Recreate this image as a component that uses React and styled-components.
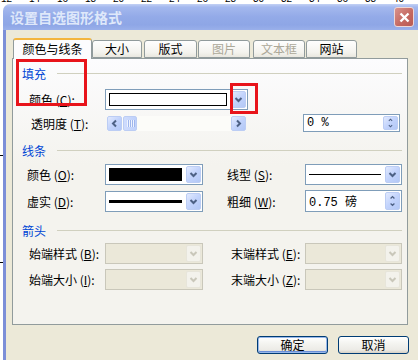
import React from "react"
import styled, { createGlobalStyle } from "styled-components"

const GlobalStyle = createGlobalStyle`
  * { box-sizing: border-box; }
  html, body { margin: 0; padding: 0; background: #fff; }
  body {
    width: 418px;
    height: 360px;
    overflow: hidden;
    font-family: "Noto Sans CJK SC", "Liberation Sans", sans-serif;
    font-size: 12px;
    color: #000;
  }
`

const rulerMarks = [12, 14, 16, 18, 20, 22, 24, 26, 28, 30, 32, 34, 36, 38, 40]

const tabs = [
  { label: "颜色与线条", w: 79, ml: 1, active: true },
  { label: "大小", w: 50, ml: 0 },
  { label: "版式", w: 53, ml: 2 },
  { label: "图片", w: 52, ml: 1, disabled: true },
  { label: "文本框", w: 52, ml: 3, disabled: true },
  { label: "网站", w: 51, ml: 1 },
]

const Chevron = ({ dir = "down", color = "#4d6185" }) => {
  const d = {
    down: "M2.5 4 L5.5 7 L8.5 4",
    up: "M2.5 7 L5.5 4 L8.5 7",
    left: "M7 2.5 L4 5.5 L7 8.5",
    right: "M4 2.5 L7 5.5 L4 8.5",
  }[dir]
  return (
    <svg width="11" height="11" viewBox="0 0 11 11">
      <path d={d} fill="none" stroke={color} strokeWidth="2" />
    </svg>
  )
}

const App = () => (
  <Screen>
    <GlobalStyle />
    <Ruler>
      {rulerMarks.map((n) => (
        <span key={n}>{n}</span>
      ))}
    </Ruler>
    <Desk>
      <DocMargin />
      <Dialog>
        <TitleBar>
          <Title>设置自选图形格式</Title>
          <CloseButton>
            <svg width="11" height="11" viewBox="0 0 11 11">
              <path d="M1.5 1.5 L9.5 9.5 M9.5 1.5 L1.5 9.5" stroke="#fff" strokeWidth="2.4" />
            </svg>
          </CloseButton>
        </TitleBar>
        <Body>
          <TabStrip>
            {tabs.map((t) => (
              <Tab key={t.label} $w={t.w} $ml={t.ml} $active={t.active} $disabled={t.disabled}>
                {t.label}
              </Tab>
            ))}
          </TabStrip>
          <Panel>
            <SectionHeader>
              <span>填充</span>
            </SectionHeader>
            <FieldRow $mt={8}>
              <Label $indent={2}>
                颜色 (<u>C</u>):
              </Label>
              <Combo $w={143}>
                <ComboValue $pad={2}>
                  <Swatch $color="#fff" />
                </ComboValue>
                <DropButton>
                  <Chevron />
                </DropButton>
              </Combo>
            </FieldRow>
            <FieldRow $mt={3} $h={20}>
              <Label $indent={4}>
                透明度 (<u>T</u>):
              </Label>
              <Scrollbar>
                <ScrollButton>
                  <Chevron dir="left" />
                </ScrollButton>
                <Thumb>
                  <i />
                  <i />
                  <i />
                  <i />
                </Thumb>
                <Track />
                <ScrollButton>
                  <Chevron dir="right" />
                </ScrollButton>
              </Scrollbar>
              <Spin $w={97} $h={18} $ml={57}>
                <SpinText>0 %</SpinText>
                <SpinButtons>
                  <Chevron dir="up" />
                  <Chevron dir="down" />
                </SpinButtons>
              </Spin>
            </FieldRow>

            <SectionHeader $mt={10}>
              <span>线条</span>
            </SectionHeader>
            <FieldRow $mt={6}>
              <Label>
                颜色 (<u>O</u>):
              </Label>
              <Combo $w={98}>
                <ComboValue $pad={2}>
                  <Swatch $color="#000" />
                </ComboValue>
                <DropButton>
                  <Chevron />
                </DropButton>
              </Combo>
              <Gap />
              <Label>
                线型 (<u>S</u>):
              </Label>
              <Combo $w={97}>
                <ComboValue>
                  <LineSample $thick={1} />
                </ComboValue>
                <DropButton>
                  <Chevron />
                </DropButton>
              </Combo>
            </FieldRow>
            <FieldRow $mt={5}>
              <Label>
                虚实 (<u>D</u>):
              </Label>
              <Combo $w={98}>
                <ComboValue>
                  <LineSample $thick={3} />
                </ComboValue>
                <DropButton>
                  <Chevron />
                </DropButton>
              </Combo>
              <Gap />
              <Label>
                粗细 (<u>W</u>):
              </Label>
              <Spin $w={97} $h={22}>
                <SpinText>0.75 磅</SpinText>
                <SpinButtons>
                  <Chevron dir="up" />
                  <Chevron dir="down" />
                </SpinButtons>
              </Spin>
            </FieldRow>

            <SectionHeader $mt={11}>
              <span>箭头</span>
            </SectionHeader>
            <FieldRow $mt={5}>
              <Label $indent={2} $disabled>
                始端样式 (<u>B</u>):
              </Label>
              <Combo $w={98} $disabled>
                <ComboValue />
                <DropButton $disabled>
                  <Chevron color="#c9c7ba" />
                </DropButton>
              </Combo>
              <Gap />
              <Label $indent={4} $disabled>
                末端样式 (<u>E</u>):
              </Label>
              <Combo $w={97} $disabled>
                <ComboValue />
                <DropButton $disabled>
                  <Chevron color="#c9c7ba" />
                </DropButton>
              </Combo>
            </FieldRow>
            <FieldRow $mt={4}>
              <Label $indent={2} $disabled>
                始端大小 (<u>I</u>):
              </Label>
              <Combo $w={98} $disabled>
                <ComboValue />
                <DropButton $disabled>
                  <Chevron color="#c9c7ba" />
                </DropButton>
              </Combo>
              <Gap />
              <Label $indent={4} $disabled>
                末端大小 (<u>Z</u>):
              </Label>
              <Combo $w={97} $disabled>
                <ComboValue />
                <DropButton $disabled>
                  <Chevron color="#c9c7ba" />
                </DropButton>
              </Combo>
            </FieldRow>

            <Highlight $kind="label" />
            <Highlight $kind="button" />
          </Panel>
          <ButtonRow>
            <PushButton $default>确定</PushButton>
            <PushButton>取消</PushButton>
          </ButtonRow>
        </Body>
      </Dialog>
    </Desk>
  </Screen>
)

export default App

const Screen = styled.div`
  width: 418px;
  height: 360px;
  overflow: hidden;
  background: #fff;
`

const Ruler = styled.div`
  height: 4px;
  overflow: hidden;
  display: flex;
  padding-left: 1px;
  font-family: "Liberation Sans", sans-serif;
  font-size: 10px;
  line-height: 10px;
  span {
    width: 28px;
    flex-shrink: 0;
    margin-top: -6px;
  }
`

const Desk = styled.div`
  display: flex;
  height: 356px;
`

const DocMargin = styled.div`
  width: 3px;
  flex-shrink: 0;
  background: linear-gradient(
    to bottom,
    #fff 151px,
    #000 151px,
    #000 152px,
    #fff 152px,
    #fff 258px,
    #000 258px,
    #000 259px,
    #fff 259px
  );
`

const Dialog = styled.div`
  width: 419px;
  flex-shrink: 0;
  display: flex;
  flex-direction: column;
  background: #ece9d8;
  border-top-left-radius: 7px;
  overflow: hidden;
`

const TitleBar = styled.div`
  height: 26px;
  display: flex;
  align-items: center;
  justify-content: space-between;
  padding: 0 8px 0 7px;
  background: linear-gradient(
    to bottom,
    #c3d1f4 0%,
    #a4b8ee 12%,
    #93aae8 50%,
    #8ea6e6 80%,
    #9ab0ea 100%
  );
`

const Title = styled.div`
  font-size: 14px;
  font-weight: bold;
  color: #dfe8fa;
  letter-spacing: 0;
`

const CloseButton = styled.div`
  width: 20px;
  height: 20px;
  border: 1px solid #eed7d6;
  border-radius: 3px;
  background: linear-gradient(135deg, #d9928c, #c4675f 60%, #b95a53);
  display: flex;
  align-items: center;
  justify-content: center;
`

const Body = styled.div`
  flex: 1;
  border-left: 3px solid #7c8fd8;
  padding: 8px 0 0 6px;
  display: flex;
  flex-direction: column;
`

const TabStrip = styled.div`
  height: 20px;
  display: flex;
  align-items: flex-end;
  position: relative;
  z-index: 1;
`

const Tab = styled.div`
  width: ${(p) => p.$w}px;
  margin-left: ${(p) => p.$ml}px;
  height: ${(p) => (p.$active ? 21 : 18)}px;
  margin-bottom: ${(p) => (p.$active ? -1 : 0)}px;
  border: 1px solid #919b9c;
  border-bottom: ${(p) => (p.$active ? "none" : "1px solid #919b9c")};
  border-top: ${(p) => (p.$active ? "2px solid #f3b53e" : "1px solid #919b9c")};
  border-radius: 3px 3px 0 0;
  background: ${(p) =>
    p.$active ? "#fcfcfe" : "linear-gradient(to bottom, #fefefe, #f4f3ee 70%, #e9e7df)"};
  color: ${(p) => (p.$disabled ? "#aca899" : "#000")};
  display: flex;
  align-items: center;
  justify-content: center;
  padding-bottom: ${(p) => (p.$active ? 2 : 0)}px;
  font-size: 12px;
  line-height: 1;
`

const Panel = styled.div`
  position: relative;
  width: 396px;
  height: 267px;
  border: 1px solid #919b9c;
  background: linear-gradient(to bottom, #fcfcfe, #f4f3ee 40%, #f4f3ee);
  padding: 7px 5px 0 9px;
`

const SectionHeader = styled.div`
  height: 14px;
  margin-top: ${(p) => p.$mt || 0}px;
  display: flex;
  align-items: center;
  color: #0046d5;
  font-size: 12px;
  &::after {
    content: "";
    flex: 1;
    height: 1px;
    background: #d0d0bf;
    margin-left: 11px;
  }
`

const FieldRow = styled.div`
  height: ${(p) => p.$h || 22}px;
  margin-top: ${(p) => p.$mt || 0}px;
  padding-left: 5px;
  display: flex;
  align-items: center;
`

const Label = styled.div`
  width: 78px;
  flex-shrink: 0;
  padding-left: ${(p) => p.$indent || 0}px;
  font-size: 12px;
  white-space: nowrap;
  color: #000;
  u {
    text-decoration: underline;
    text-underline-offset: 1px;
  }
`

const Gap = styled.div`
  width: 24px;
  flex-shrink: 0;
`

const Combo = styled.div`
  width: ${(p) => p.$w}px;
  height: 21px;
  flex-shrink: 0;
  border: 1px solid ${(p) => (p.$disabled ? "#c9c7ba" : "#7f9db9")};
  background: ${(p) => (p.$disabled ? "#ebe8d9" : "#fff")};
  display: flex;
  padding: 1px;
  gap: 1px;
`

const ComboValue = styled.div`
  flex: 1;
  display: flex;
  align-items: center;
  padding: ${(p) => p.$pad || 0}px;
  padding-left: ${(p) => (p.$pad ? p.$pad : 2)}px;
  padding-right: 3px;
`

const Swatch = styled.div`
  width: 100%;
  height: 100%;
  background: ${(p) => p.$color};
  border: 1px solid #000;
`

const LineSample = styled.div`
  width: 100%;
  height: ${(p) => p.$thick}px;
  background: #000;
`

const DropButton = styled.div`
  width: 15px;
  flex-shrink: 0;
  border: 1px solid ${(p) => (p.$disabled ? "#e7e5da" : "#bccdf4")};
  border-radius: 2px;
  background: ${(p) =>
    p.$disabled ? "#f3f2ec" : "linear-gradient(135deg, #e2eafe, #c2d3fc 50%, #b3c8f6)"};
  display: flex;
  align-items: center;
  justify-content: center;
`

const Scrollbar = styled.div`
  width: 139px;
  height: 15px;
  margin-left: 2px;
  display: flex;
  background: #fcfcf9;
`

const ScrollButton = styled.div`
  width: 15px;
  height: 15px;
  border: 1px solid #bccdf4;
  border-radius: 2px;
  background: linear-gradient(135deg, #e2eafe, #c2d3fc 50%, #b3c8f6);
  display: flex;
  align-items: center;
  justify-content: center;
`

const Thumb = styled.div`
  width: 14px;
  height: 15px;
  margin-left: 1px;
  border: 1px solid #bccdf4;
  border-radius: 2px;
  background: linear-gradient(to right, #cfdcfd, #bfd1fb);
  display: flex;
  align-items: center;
  justify-content: center;
  gap: 1px;
  i {
    width: 1px;
    height: 7px;
    background: #eef3ff;
    box-shadow: 1px 0 0 #9fb6ec;
  }
`

const Track = styled.div`
  flex: 1;
`

const Spin = styled.div`
  width: ${(p) => p.$w}px;
  height: ${(p) => p.$h}px;
  margin-left: ${(p) => p.$ml || 0}px;
  flex-shrink: 0;
  border: 1px solid #7f9db9;
  background: #fff;
  display: flex;
  padding: 1px;
`

const SpinText = styled.div`
  flex: 1;
  display: flex;
  align-items: center;
  padding-left: 2px;
  font-size: 12px;
  font-family: "Liberation Mono", "Noto Sans CJK SC", monospace;
  white-space: pre;
`

const SpinButtons = styled.div`
  width: 15px;
  flex-shrink: 0;
  border: 1px solid #bccdf4;
  border-radius: 2px;
  background: linear-gradient(135deg, #e2eafe, #c2d3fc 50%, #b3c8f6);
  display: flex;
  flex-direction: column;
  align-items: center;
  justify-content: center;
  svg {
    width: 9px;
    height: 7px;
  }
`

const Highlight = styled.div`
  position: absolute;
  border: 3px solid #e8141b;
  pointer-events: none;
  ${(p) =>
    p.$kind === "label"
      ? `left: 3px; top: 0px; width: 71px; height: 47px;`
      : `left: 217px; top: 24px; width: 28px; height: 31px;`}
`

const ButtonRow = styled.div`
  width: 397px;
  margin-top: 11px;
  display: flex;
  justify-content: flex-end;
  gap: 10px;
`

const PushButton = styled.div`
  width: 71px;
  height: 18px;
  border: 1px solid #003c74;
  border-radius: 3px;
  background: linear-gradient(to bottom, #ffffff, #f4f4f0 40%, #ecebe6 80%, #d6d0c5);
  box-shadow: ${(p) => (p.$default ? "inset 0 0 0 1px #98b8ea, inset 0 -1px 0 1px #6b8fd8" : "none")};
  display: flex;
  align-items: center;
  justify-content: center;
  font-size: 12px;
  line-height: 1;
`
